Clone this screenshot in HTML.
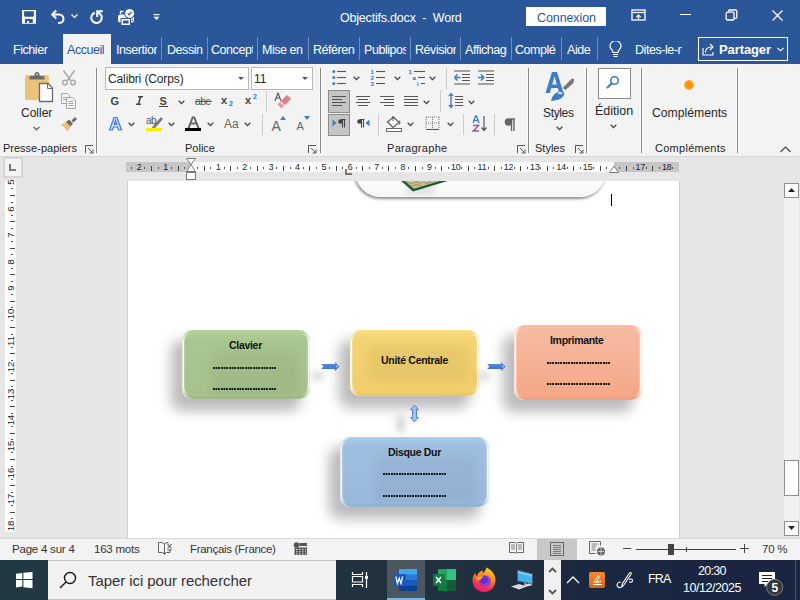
<!DOCTYPE html>
<html><head><meta charset="utf-8">
<style>
*{margin:0;padding:0;box-sizing:border-box}
html,body{width:800px;height:600px;overflow:hidden;font-family:"Liberation Sans",sans-serif;background:#e6e6e6;position:relative}
.a{position:absolute}
#title{left:0;top:0;width:800px;height:64px;background:#2b579a}
#ribbon{left:0;top:64px;width:800px;height:93px;background:#f3f3f3;border-bottom:1px solid #d6d6d6}
#rulerrow{left:0;top:157px;width:800px;height:23px;background:#e6e6e6}
#docarea{left:0;top:180px;width:800px;height:358px;background:#e6e6e6}
#page{left:128px;top:181px;width:551px;height:357px;background:#fff}
#status{left:0;top:538px;width:800px;height:22px;background:#f3f3f3;border-top:1px solid #dadada}
#taskbar{left:0;top:560px;width:800px;height:40px;background:linear-gradient(90deg,#213a44 0,#22333f 40%,#1f2f3e 65%,#1b2841 72%,#1a2541 100%)}
.w{color:#fff}
.tab{font-size:12.5px;letter-spacing:-0.45px}
.rb{font-size:12px;color:#262626}
.gl{font-size:11px;letter-spacing:0px}
.sep{width:1px;background:#cdcdcd}
.gsep{width:1px;background:#878787;box-shadow:-1px 0 #fbfbfb,1px 0 #fbfbfb}
.rl{font-size:8.8px;color:#222;line-height:12px}
.rlv{font-size:9.6px}
.bx{font-size:10.5px;font-weight:bold;color:#111;letter-spacing:-0.3px}
.bxd{font-size:8px;font-weight:bold;color:#222;letter-spacing:-0.5px}
.sb{font-size:11.5px;color:#333;letter-spacing:-0.22px}
.t{white-space:nowrap;line-height:1}
</style></head><body>

<div id="title" class="a">
 <!-- save -->
 <svg class="a" style="left:21px;top:9px" width="16" height="16" viewBox="0 0 16 16"><rect x="1" y="1" width="14" height="13.8" rx="0.5" fill="#fff"/><path d="M3.1 2.2h9.8v4.7l-0.8 0.8H3.9l-0.8-0.8z" fill="#2b579a"/><rect x="4" y="10" width="7.8" height="3.9" fill="#2b579a"/><rect x="6" y="11.9" width="2" height="2" fill="#fff"/></svg>
 <!-- undo -->
 <svg class="a" style="left:50px;top:9px" width="17" height="15" viewBox="0 0 17 15"><path d="M2.5 5.5h6.5a4.5 4.5 0 0 1 4.5 4.5 4 4 0 0 1-4 4H8" fill="none" stroke="#fff" stroke-width="2"/><path d="M6.2 1.5L2.2 5.5l4 4" fill="none" stroke="#fff" stroke-width="2"/></svg>
 <svg class="a" style="left:71px;top:14px" width="7" height="5" viewBox="0 0 7 5"><path d="M0.5 0.5l3 3 3-3" fill="none" stroke="#fff" stroke-width="1.2"/></svg>
 <!-- redo -->
 <svg class="a" style="left:89px;top:8.5px" width="16" height="16" viewBox="0 0 16 16"><path d="M5.9 3.7A5.25 5.25 0 1 0 11.2 5" fill="none" stroke="#fff" stroke-width="2"/><path d="M11.4 5.2L8.8 2.8" stroke="#fff" stroke-width="2"/><path d="M8.2 8V2.3h5.6" fill="none" stroke="#fff" stroke-width="2"/></svg>
 <!-- print preview -->
 <svg class="a" style="left:117px;top:8px" width="19" height="17" viewBox="0 0 19 17"><path d="M3.5 6V3.5h3" fill="none" stroke="#fff" stroke-width="1.3"/><rect x="1" y="6.5" width="16" height="8" rx="2" fill="#fff"/><rect x="3.5" y="10" width="10.5" height="7" fill="#2b579a"/><rect x="4.5" y="11" width="8.5" height="6" fill="#fff"/><rect x="6" y="12.5" width="5.5" height="3" fill="#2b579a"/><circle cx="12.6" cy="5.4" r="5.4" fill="#2b579a"/><circle cx="12.6" cy="5.4" r="4.5" fill="#fff"/><path d="M10.8 5.4l1.3 1.4 2.4-2.8" fill="none" stroke="#2b579a" stroke-width="1.2"/><circle cx="15.5" cy="12" r="0.8" fill="#2b579a"/></svg>
 <svg class="a" style="left:153px;top:14px" width="7" height="7" viewBox="0 0 7 7"><rect x="0.5" y="0" width="6" height="1.2" fill="#fff"/><path d="M0.5 2.8h6l-3 3.5z" fill="#fff"/></svg>
 <div class="a t w" style="left:340px;top:12px;font-size:12.5px;letter-spacing:-0.2px">Objectifs.docx&nbsp; -&nbsp; Word</div>
 <div class="a" style="left:526px;top:7px;width:80px;height:19px;background:#fff"></div>
 <div class="a t" style="left:537px;top:12px;font-size:12.5px;color:#2b579a;letter-spacing:-0.1px">Connexion</div>
 <!-- ribbon display options -->
 <svg class="a" style="left:631px;top:9px" width="15" height="12" viewBox="0 0 15 12"><rect x="1" y="1" width="13" height="10" fill="none" stroke="#fff" stroke-width="1.3"/><path d="M1 3.5h13" stroke="#fff" stroke-width="1.2"/><path d="M7.5 10.5V6M5.3 8.2L7.5 6l2.2 2.2" fill="none" stroke="#fff" stroke-width="1.2"/></svg>
 <div class="a" style="left:680px;top:14px;width:11px;height:1px;background:#fff"></div>
 <svg class="a" style="left:725px;top:9px" width="13" height="12" viewBox="0 0 13 12"><rect x="1.2" y="3.2" width="7.8" height="7.8" rx="1.2" fill="none" stroke="#fff" stroke-width="1.3"/><path d="M3.5 3V2.2a1.2 1.2 0 0 1 1.2-1.2h5.6a1.5 1.5 0 0 1 1.5 1.5v5.6a1.2 1.2 0 0 1-1.2 1.2H9.2" fill="none" stroke="#fff" stroke-width="1.3"/></svg>
 <svg class="a" style="left:772px;top:10px" width="11" height="11" viewBox="0 0 11 11"><path d="M0.5 0.5l10 10M10.5 0.5l-10 10" stroke="#fff" stroke-width="1.2"/></svg>

 <div class="a" style="left:63px;top:34px;width:48px;height:30px;background:#f3f3f3"></div>
 <div class="a t w tab" style="left:13px;top:44px">Fichier</div>
 <div class="a t tab" style="left:67px;top:44px;color:#2b579a">Accueil</div>
 <div class="a t w tab" style="left:116px;top:44px;width:41px;overflow:hidden">Insertion</div>
 <div class="a t w tab" style="left:167px;top:44px;width:36px;overflow:hidden">Dessin</div>
 <div class="a t w tab" style="left:211px;top:44px;width:42px;overflow:hidden">Conception</div>
 <div class="a t w tab" style="left:262px;top:44px;width:42px;overflow:hidden">Mise en page</div>
 <div class="a t w tab" style="left:313px;top:44px;width:42px;overflow:hidden">Références</div>
 <div class="a t w tab" style="left:364px;top:44px;width:42px;overflow:hidden">Publipostage</div>
 <div class="a t w tab" style="left:415px;top:44px;width:41px;overflow:hidden">Révision</div>
 <div class="a t w tab" style="left:465px;top:44px;width:42px;overflow:hidden">Affichage</div>
 <div class="a t w tab" style="left:515px;top:44px;width:41px;overflow:hidden">Compléments</div>
 <div class="a t w tab" style="left:567px;top:44px;width:28px;overflow:hidden">Aide</div>
 <div class="a" style="left:161px;top:37px;width:1px;height:23px;background:#6d8fc0"></div>
 <div class="a" style="left:207px;top:37px;width:1px;height:23px;background:#6d8fc0"></div>
 <div class="a" style="left:257px;top:37px;width:1px;height:23px;background:#6d8fc0"></div>
 <div class="a" style="left:308px;top:37px;width:1px;height:23px;background:#6d8fc0"></div>
 <div class="a" style="left:359px;top:37px;width:1px;height:23px;background:#6d8fc0"></div>
 <div class="a" style="left:410px;top:37px;width:1px;height:23px;background:#6d8fc0"></div>
 <div class="a" style="left:460px;top:37px;width:1px;height:23px;background:#6d8fc0"></div>
 <div class="a" style="left:511px;top:37px;width:1px;height:23px;background:#6d8fc0"></div>
 <div class="a" style="left:561px;top:37px;width:1px;height:23px;background:#6d8fc0"></div>
 <div class="a" style="left:597px;top:37px;width:1px;height:23px;background:#6d8fc0"></div>

 <svg class="a" style="left:609px;top:41px" width="13" height="17" viewBox="0 0 13 17"><path d="M4 11.5C4 9 1 7.8 1 5.2a5.5 5.5 0 0 1 11 0c0 2.6-3 3.8-3 6.3z" fill="none" stroke="#fff" stroke-width="1.2"/><path d="M4 13.5h5M4.5 15.5h4" stroke="#fff" stroke-width="1.2"/></svg>
 <div class="a t w tab" style="left:635px;top:44px;width:47px;overflow:hidden">Dites-le-nous</div>
 <div class="a" style="left:698px;top:37px;width:90px;height:24px;border:1px solid #fff"></div>
 <svg class="a" style="left:702px;top:42px" width="14" height="14" viewBox="0 0 14 14"><path d="M1 6v7h10V10" fill="none" stroke="#fff" stroke-width="1.1"/><path d="M3.5 10.5c0-4 2.5-5.5 6-5.5M8 2l3 3-3 3" fill="none" stroke="#fff" stroke-width="1.1"/></svg>
 <div class="a t w" style="left:719px;top:42.5px;font-size:13px;font-weight:bold;letter-spacing:-0.1px">Partager</div>
 <svg class="a" style="left:777px;top:47px" width="7" height="5" viewBox="0 0 7 5"><path d="M0.5 0.8l3 3 3-3" fill="none" stroke="#fff" stroke-width="1.1"/></svg>
</div>
<!--RIBBON-->

<div id="ribbon" class="a"></div>
 <!-- clipboard group -->
 <svg class="a" style="left:24px;top:71px" width="31" height="32" viewBox="0 0 31 32"><rect x="1" y="4" width="24" height="25" rx="1.8" fill="#eac27a"/><path d="M5.5 8.5V6.5c0-1 .5-1.5 1.5-1.5h3.5V3.5a2.5 2.5 0 0 1 5 0V5h3.5c1 0 1.5.5 1.5 1.5v2z" fill="#6b6b6b"/><circle cx="13" cy="3.5" r="1" fill="#eac27a"/><path d="M15.5 12.5h8.5l4.5 4.5v13.5h-13z" fill="#fff" stroke="#6b6b6b" stroke-width="1.3"/><path d="M23.5 12.5v5h5" fill="none" stroke="#6b6b6b" stroke-width="1"/></svg>
 <div class="a t rb" style="left:21px;top:107px">Coller</div>
 <svg class="a" style="left:33px;top:126px" width="7" height="5" viewBox="0 0 7 5"><path d="M0.5 0.8l3 3 3-3" fill="none" stroke="#444" stroke-width="1.1"/></svg>
 <svg class="a" style="left:61px;top:69px" width="16" height="17" viewBox="0 0 16 17"><path d="M2.5 1.5l7 10M13.5 1.5l-7 10" stroke="#a6a6a6" stroke-width="1.4"/><circle cx="4" cy="13.5" r="2.4" fill="none" stroke="#a6a6a6" stroke-width="1.3"/><circle cx="12" cy="13.5" r="2.4" fill="none" stroke="#a6a6a6" stroke-width="1.3"/></svg>
 <svg class="a" style="left:60px;top:92px" width="17" height="17" viewBox="0 0 17 17"><path d="M1.5 1.5h6l2 2v8h-8z" fill="none" stroke="#a6a6a6"/><path d="M6.5 5.5h6l3 3v8h-9z" fill="#f3f3f3" stroke="#a6a6a6"/><path d="M8.5 9.5h5M8.5 11.5h5M8.5 13.5h5M3 5.5h3M3 7.5h3" stroke="#a6a6a6"/></svg>
 <svg class="a" style="left:60px;top:116px" width="18" height="16" viewBox="0 0 18 16"><path d="M1 8.5l5.5-3 4.5 4.5-3 5.5z" fill="#eac27a"/><path d="M6 6l3-2.5 4 4L10.5 10.5z" fill="#6b6b6b"/><path d="M11.5 4.5l3.5-3.5 2 2-3.5 3.5z" fill="#6b6b6b"/></svg>
 <div class="a t rb gl" style="left:3px;top:143px">Presse-papiers</div>
 <svg class="a" style="left:85px;top:145px" width="9" height="9" viewBox="0 0 9 9"><path d="M0.5 8V0.5H8" fill="none" stroke="#555"/><path d="M3 3l5 5M8 4.5V8H4.5" fill="none" stroke="#555"/></svg>
 <div class="a gsep" style="left:96px;top:68px;height:85px"></div>
 <!-- police -->
 <div class="a" style="left:105px;top:67px;width:144px;height:23px;background:#fff;border:1px solid #b9b9b9"></div>
 <div class="a t rb" style="left:108px;top:73px;letter-spacing:-0.12px">Calibri (Corps)</div>
 <svg class="a" style="left:238px;top:77px" width="6" height="3" viewBox="0 0 6 3"><path d="M0 0h6L3 3z" fill="#555"/></svg>
 <div class="a" style="left:251px;top:67px;width:62px;height:23px;background:#fff;border:1px solid #b9b9b9"></div>
 <div class="a t rb" style="left:254px;top:73px">11</div>
 <svg class="a" style="left:302px;top:77px" width="6" height="3" viewBox="0 0 6 3"><path d="M0 0h6L3 3z" fill="#555"/></svg>
 <div class="a gsep" style="left:320px;top:68px;height:85px"></div>
 <div class="a t rb gl" style="left:185px;top:143px">Police</div>
 <svg class="a" style="left:308px;top:145px" width="9" height="9" viewBox="0 0 9 9"><path d="M0.5 8V0.5H8" fill="none" stroke="#555"/><path d="M3 3l5 5M8 4.5V8H4.5" fill="none" stroke="#555"/></svg>
 <!-- paragraphe -->
 <div class="a t rb gl" style="left:387px;top:143px;letter-spacing:0.3px">Paragraphe</div>
 <svg class="a" style="left:517px;top:145px" width="9" height="9" viewBox="0 0 9 9"><path d="M0.5 8V0.5H8" fill="none" stroke="#555"/><path d="M3 3l5 5M8 4.5V8H4.5" fill="none" stroke="#555"/></svg>
 <div class="a gsep" style="left:528px;top:68px;height:85px"></div>
 <!-- styles -->
 <div class="a t rb" style="left:543px;top:107px;letter-spacing:-0.35px">Styles</div>
 <div class="a t rb gl" style="left:535px;top:143px">Styles</div>
 <svg class="a" style="left:575px;top:145px" width="9" height="9" viewBox="0 0 9 9"><path d="M0.5 8V0.5H8" fill="none" stroke="#555"/><path d="M3 3l5 5M8 4.5V8H4.5" fill="none" stroke="#555"/></svg>
 <div class="a gsep" style="left:586px;top:68px;height:85px"></div>
 <!-- edition -->
 <div class="a" style="left:598px;top:68px;width:33px;height:31px;background:#fff;border:1px solid #8a8a8a"></div>
 <div class="a t rb" style="left:595px;top:105px;font-size:12.5px">Édition</div>
 <div class="a gsep" style="left:641px;top:68px;height:85px"></div>
 <!-- complements -->
 <div class="a" style="left:684px;top:80px;width:10px;height:10px;border-radius:50%;background:radial-gradient(circle,#ff9400 0,#ff9400 45%,rgba(255,148,0,0.6) 75%,rgba(255,148,0,0) 100%)"></div>
 <div class="a t rb" style="left:652px;top:107px;font-size:12.2px">Compléments</div>
 <div class="a t rb gl" style="left:655px;top:143px;letter-spacing:0.27px">Compléments</div>
 <div class="a gsep" style="left:737px;top:68px;height:85px"></div>
 <svg class="a" style="left:780px;top:146px" width="11" height="7" viewBox="0 0 11 7"><path d="M0.5 6l5-5 5 5" fill="none" stroke="#444" stroke-width="1.1"/></svg>

<!-- POLICE ICONS -->
<div class="a t" style="left:110.5px;top:96px;font-size:11px;font-weight:bold;color:#444">G</div>
<svg class="a" style="left:135px;top:96px" width="9" height="9" viewBox="0 0 9 9"><path d="M3 0.8h5M1 8.2h5M5.5 0.8L3.5 8.2" stroke="#444" stroke-width="1.5" fill="none"/></svg>
<div class="a t" style="left:159.5px;top:96px;font-size:11px;font-weight:bold;color:#444">S</div>
<div class="a" style="left:159px;top:106px;width:9px;height:1.3px;background:#444"></div>
<svg class="a" style="left:178px;top:100px" width="7" height="5" viewBox="0 0 7 5"><path d="M0.7 0.8l2.8 2.8 2.8-2.8" fill="none" stroke="#444" stroke-width="1.3"/></svg>
<div class="a t" style="left:195px;top:96px;font-size:10.5px;color:#555;letter-spacing:-0.6px">abc</div>
<div class="a" style="left:195px;top:101px;width:17px;height:1px;background:#555"></div>
<div class="a t" style="left:221px;top:95px;font-size:11px;font-weight:bold;color:#444">x</div>
<div class="a t" style="left:229px;top:100px;font-size:7px;font-weight:bold;color:#2e75c0">2</div>
<div class="a t" style="left:245px;top:95px;font-size:11px;font-weight:bold;color:#444">x</div>
<div class="a t" style="left:253px;top:93px;font-size:7px;font-weight:bold;color:#2e75c0">2</div>
<div class="a sep" style="left:266px;top:91px;height:21px"></div>
<svg class="a" style="left:274px;top:92px" width="18" height="18" viewBox="0 0 18 18"><path d="M1 9L4 1l3 8M2.2 6h3.6" fill="none" stroke="#555" stroke-width="1.1"/><path d="M7 9l6-6 4 4-6 6z" fill="#e47b8c"/><path d="M3.5 12.5L7 9l4 4-3.5 3.5z" fill="#ea95a2"/><path d="M6.5 10l4 4" stroke="#fff" stroke-width="1"/></svg>
<svg class="a" style="left:108px;top:116px" width="15" height="15" viewBox="0 0 15 15"><path d="M1.5 14L6 1.5h3L13.5 14h-3l-1-3h-4l-1 3z M6.3 8.5h2.4L7.5 4.5z" fill="#c9dcf3" stroke="#3f7dc8" stroke-width="1.2"/></svg>
<svg class="a" style="left:128px;top:122px" width="7" height="5" viewBox="0 0 7 5"><path d="M0.7 0.8l2.8 2.8 2.8-2.8" fill="none" stroke="#444" stroke-width="1.3"/></svg>
<div class="a t" style="left:146px;top:116px;font-size:10px;color:#555;letter-spacing:-0.5px">ab</div>
<svg class="a" style="left:150px;top:115px" width="13" height="14" viewBox="0 0 13 14"><path d="M3 11l8-9 2 2-8 9z" fill="#777"/><path d="M2 13l1-2 2 2z" fill="#777"/></svg>
<div class="a" style="left:146px;top:128px;width:16px;height:3px;background:#f5f300"></div>
<svg class="a" style="left:168px;top:122px" width="7" height="5" viewBox="0 0 7 5"><path d="M0.7 0.8l2.8 2.8 2.8-2.8" fill="none" stroke="#444" stroke-width="1.3"/></svg>
<svg class="a" style="left:186px;top:116px" width="15" height="12" viewBox="0 0 15 12"><path d="M1.5 12L6 0.5h3L13.5 12h-2.2L10 8.5H5L3.7 12z M5.7 6.5h3.6L7.5 2z" fill="#666"/></svg>
<div class="a" style="left:185px;top:128px;width:16px;height:3px;background:#000"></div>
<svg class="a" style="left:207px;top:122px" width="7" height="5" viewBox="0 0 7 5"><path d="M0.7 0.8l2.8 2.8 2.8-2.8" fill="none" stroke="#444" stroke-width="1.3"/></svg>
<div class="a t" style="left:224px;top:118px;font-size:12px;color:#666">Aa</div>
<svg class="a" style="left:244px;top:122px" width="7" height="5" viewBox="0 0 7 5"><path d="M0.7 0.8l2.8 2.8 2.8-2.8" fill="none" stroke="#444" stroke-width="1.3"/></svg>
<div class="a sep" style="left:262px;top:114px;height:21px"></div>
<div class="a t" style="left:271.5px;top:118.5px;font-size:14px;color:#666">A</div>
<svg class="a" style="left:280px;top:116px" width="6" height="4" viewBox="0 0 6 4"><path d="M0 4h6L3 0z" fill="#3f7dc8"/></svg>
<div class="a t" style="left:296.5px;top:121px;font-size:11px;color:#666">A</div>
<svg class="a" style="left:304px;top:116px" width="6" height="4" viewBox="0 0 6 4"><path d="M0 0h6L3 4z" fill="#3f7dc8"/></svg>
<!-- PARA ICONS -->
<svg class="a" style="left:332px;top:69px" width="15" height="16" viewBox="0 0 15 16"><circle cx="1.8" cy="2.5" r="1.5" fill="#3f7dc8"/><path d="M5 2.5h9" stroke="#555" stroke-width="1.1"/><circle cx="1.8" cy="8.5" r="1.5" fill="#3f7dc8"/><path d="M5 8.5h9" stroke="#555" stroke-width="1.1"/><circle cx="1.8" cy="14.5" r="1.5" fill="#3f7dc8"/><path d="M5 14.5h9" stroke="#555" stroke-width="1.1"/></svg>
<svg class="a" style="left:353px;top:76px" width="7" height="5" viewBox="0 0 7 5"><path d="M0.7 0.8l2.8 2.8 2.8-2.8" fill="none" stroke="#444" stroke-width="1.3"/></svg>
<svg class="a" style="left:370px;top:68px" width="16" height="18" viewBox="0 0 16 18"><text x="0.5" y="6.0" font-size="6.2" font-weight="bold" fill="#2f6fc0" font-family="Liberation Sans">1</text><path d="M6 3.5h9" stroke="#555" stroke-width="1.1"/><text x="0.5" y="12.0" font-size="6.2" font-weight="bold" fill="#2f6fc0" font-family="Liberation Sans">2</text><path d="M6 9.5h9" stroke="#555" stroke-width="1.1"/><text x="0.5" y="18.0" font-size="6.2" font-weight="bold" fill="#2f6fc0" font-family="Liberation Sans">3</text><path d="M6 15.5h9" stroke="#555" stroke-width="1.1"/></svg>
<svg class="a" style="left:394px;top:76px" width="7" height="5" viewBox="0 0 7 5"><path d="M0.7 0.8l2.8 2.8 2.8-2.8" fill="none" stroke="#444" stroke-width="1.3"/></svg>
<svg class="a" style="left:408px;top:68px" width="18" height="18" viewBox="0 0 18 18"><text x="0.5" y="6" font-size="6.2" font-weight="bold" fill="#2f6fc0" font-family="Liberation Sans">1</text><path d="M6 3.5h11" stroke="#555" stroke-width="1.1"/><text x="4.5" y="12" font-size="6.2" font-weight="bold" fill="#2f6fc0" font-family="Liberation Sans">a</text><path d="M10 9.5h7" stroke="#555" stroke-width="1.1"/><text x="9" y="18" font-size="6.2" font-weight="bold" fill="#2f6fc0" font-family="Liberation Sans">i</text><path d="M13 15.5h4" stroke="#555" stroke-width="1.1"/></svg>
<svg class="a" style="left:429px;top:76px" width="7" height="5" viewBox="0 0 7 5"><path d="M0.7 0.8l2.8 2.8 2.8-2.8" fill="none" stroke="#444" stroke-width="1.3"/></svg>
<div class="a sep" style="left:446px;top:68px;height:21px"></div>
<svg class="a" style="left:453px;top:70px" width="18" height="15" viewBox="0 0 18 15"><path d="M1 1h16M9 4.5h8M9 7.5h8M9 10.5h8M1 14h16" stroke="#555" stroke-width="1.1"/><path d="M1.5 7.5h6M1.5 7.5l3-3M1.5 7.5l3 3" fill="none" stroke="#3f7dc8" stroke-width="1.6"/></svg>
<svg class="a" style="left:477px;top:70px" width="18" height="15" viewBox="0 0 18 15"><path d="M1 1h16M9 4.5h8M9 7.5h8M9 10.5h8M1 14h16" stroke="#555" stroke-width="1.1"/><path d="M1 7.5h6M7 7.5l-3-3M7 7.5l-3 3" fill="none" stroke="#3f7dc8" stroke-width="1.6"/></svg>
<div class="a" style="left:328px;top:90px;width:22px;height:23px;background:#c5c5c5;border:1px solid #8c8c8c"></div>
<svg class="a" style="left:331px;top:95px" width="16" height="13" viewBox="0 0 16 13"><path d="M1 1.5h14M1 4.5h10M1 7.5h14M1 10.5h10" stroke="#555" stroke-width="1.1"/></svg>
<svg class="a" style="left:355px;top:95px" width="16" height="13" viewBox="0 0 16 13"><path d="M1 1.5h14M3 4.5h10M1 7.5h14M3 10.5h10" stroke="#555" stroke-width="1.1"/></svg>
<svg class="a" style="left:379px;top:95px" width="16" height="13" viewBox="0 0 16 13"><path d="M1 1.5h14M5 4.5h10M1 7.5h14M5 10.5h10" stroke="#555" stroke-width="1.1"/></svg>
<svg class="a" style="left:403px;top:95px" width="16" height="13" viewBox="0 0 16 13"><path d="M1 1.5h14M1 4.5h14M1 7.5h14M1 10.5h14" stroke="#555" stroke-width="1.1"/></svg>
<svg class="a" style="left:423px;top:100px" width="7" height="5" viewBox="0 0 7 5"><path d="M0.7 0.8l2.8 2.8 2.8-2.8" fill="none" stroke="#444" stroke-width="1.3"/></svg>
<div class="a sep" style="left:440px;top:90px;height:22px"></div>
<svg class="a" style="left:448px;top:92px" width="16" height="17" viewBox="0 0 16 17"><path d="M3 1.5v14M1 4l2-2.5L5 4M1 13l2 2.5L5 13" fill="none" stroke="#3f7dc8" stroke-width="1.4"/><path d="M7 4.5h8M7 7.5h8M7 10.5h8M7 13.5h8" stroke="#555" stroke-width="1.1"/></svg>
<svg class="a" style="left:468px;top:100px" width="7" height="5" viewBox="0 0 7 5"><path d="M0.7 0.8l2.8 2.8 2.8-2.8" fill="none" stroke="#444" stroke-width="1.3"/></svg>
<div class="a" style="left:328px;top:114px;width:22px;height:22px;background:#c5c5c5;border:1px solid #8c8c8c"></div>
<svg class="a" style="left:332px;top:119px" width="14" height="9" viewBox="0 0 14 9"><path d="M0.5 0.5l4 3.5-4 3.5z" fill="#3f7dc8"/><path d="M9 0.5h4.5M10.5 0.5v8M12.5 0.5v8" stroke="#444" stroke-width="1.1"/><circle cx="8.5" cy="2.5" r="2.3" fill="#444"/></svg>
<svg class="a" style="left:356px;top:119px" width="14" height="9" viewBox="0 0 14 9"><path d="M4 0.5h4.5M5.5 0.5v8M7.5 0.5v8" stroke="#444" stroke-width="1.1"/><circle cx="3.5" cy="2.5" r="2.3" fill="#444"/><path d="M13.5 0.5l-4 3.5 4 3.5z" fill="#3f7dc8"/></svg>
<div class="a sep" style="left:378px;top:114px;height:21px"></div>
<svg class="a" style="left:385px;top:115px" width="18" height="18" viewBox="0 0 18 18"><path d="M2.5 7l6-5 5.5 5.5-6 5z" fill="#fff" stroke="#555" stroke-width="1.1"/><path d="M8 1v5" stroke="#555"/><path d="M14 5c2 1 2 4 0 5z" fill="#3f7dc8"/><rect x="1.5" y="13.5" width="15" height="3" fill="#fff" stroke="#666"/></svg>
<svg class="a" style="left:407px;top:122px" width="7" height="5" viewBox="0 0 7 5"><path d="M0.7 0.8l2.8 2.8 2.8-2.8" fill="none" stroke="#444" stroke-width="1.3"/></svg>
<svg class="a" style="left:425px;top:116px" width="15" height="14" viewBox="0 0 15 14"><path d="M1 1h13M1 7h13M1 1v12M7.5 1v12M14 1v12" fill="none" stroke="#777" stroke-width="1" stroke-dasharray="1 1"/><path d="M1 13.5h13" stroke="#555" stroke-width="1.1"/></svg>
<svg class="a" style="left:447px;top:122px" width="7" height="5" viewBox="0 0 7 5"><path d="M0.7 0.8l2.8 2.8 2.8-2.8" fill="none" stroke="#444" stroke-width="1.3"/></svg>
<div class="a sep" style="left:463px;top:114px;height:21px"></div>
<svg class="a" style="left:472px;top:115px" width="16" height="17" viewBox="0 0 16 17"><path d="M1 8L3.5 1h1L7 8M2 5.5h4" fill="none" stroke="#3f7dc8" stroke-width="1.3"/><path d="M1.2 10.5h5.5L1.2 16h5.8" fill="none" stroke="#8a4fbf" stroke-width="1.3"/><path d="M12 1v14M9.5 12.5L12 15.5l2.5-3" fill="none" stroke="#555" stroke-width="1.2"/></svg>
<div class="a sep" style="left:494px;top:114px;height:21px"></div>
<svg class="a" style="left:504px;top:118px" width="12" height="13" viewBox="0 0 12 13"><path d="M6 1h5M7.5 1v12M10 1v12" stroke="#666" stroke-width="1.4"/><circle cx="4.5" cy="4" r="3.8" fill="#666"/></svg>
<svg class="a" style="left:545px;top:71px" width="30" height="31" viewBox="0 0 30 31"><path d="M0.5 22L7 1h5l6.5 21h-4.2l-1.5-5H6.2l-1.5 5z M7.2 13.5h4.6L9.5 5.5z" fill="#3f7dc8"/><path d="M17.5 17l9.5-9.5 2 0.5-0.5 4-8 7z" fill="#777"/><path d="M6 30c0.5-4 4-9 9-10 3-0.5 5 1.5 4 4-1.5 3.5-6 5.5-13 6z" fill="#3f7dc8"/><path d="M13 22.5c1.5-1 3-1 4 0.5" stroke="#fff" stroke-width="1.5" fill="none"/></svg>
<svg class="a" style="left:556px;top:126px" width="7" height="5" viewBox="0 0 7 5"><path d="M0.7 0.8l2.8 2.8 2.8-2.8" fill="none" stroke="#444" stroke-width="1.3"/></svg>
<svg class="a" style="left:606px;top:75px" width="14" height="14" viewBox="0 0 14 14"><circle cx="8.5" cy="5.5" r="3.8" fill="none" stroke="#3f7dc8" stroke-width="1.6"/><path d="M5.8 8.2L1.5 12.5" stroke="#3f7dc8" stroke-width="2" stroke-linecap="round"/></svg>
<svg class="a" style="left:610px;top:124px" width="7" height="5" viewBox="0 0 7 5"><path d="M0.7 0.8l2.8 2.8 2.8-2.8" fill="none" stroke="#444" stroke-width="1.3"/></svg>
<div id="rulerrow" class="a"></div>
<div id="docarea" class="a"></div>
<div id="page" class="a"></div>
<div class="a" style="left:127px;top:181px;width:1px;height:357px;background:#cfcfcf"></div>
<div class="a" style="left:679px;top:181px;width:1px;height:357px;background:#cfcfcf"></div>


<!-- DOC CONTENT -->
<div class="a" style="left:128px;top:181px;width:551px;height:357px;overflow:hidden">
 <div class="a" style="left:227px;top:-61px;width:251px;height:77px;border-radius:26px;background:linear-gradient(#f4f4f4,#fcfcfc 80%,#f6f6f6);box-shadow:-1px 1.5px 3px rgba(0,0,0,0.45)"></div>
 <div class="a" style="left:278px;top:4px;width:28px;height:9px;background:rgba(0,0,0,0.10);filter:blur(3px)"></div><svg class="a" style="left:265px;top:-1px" width="70" height="14" viewBox="0 0 70 14"><path d="M7 0L20 11.5 58 0z" fill="#24583a"/><path d="M10.5 0L21 8.8 50 0z" fill="#c8bd8e"/><path d="M13 1.5l5 2.5 6-2.5 5 3M19 6l5-1.5 4 1.5M30 2l4 1.5 4-2" stroke="#9d8d55" stroke-width="0.9" fill="none"/></svg>
</div>
<div class="a" style="left:611px;top:194px;width:1px;height:12px;background:#000"></div>
<div class="a" style="left:182px;top:330px;width:128px;height:69px;border-radius:10px;background:linear-gradient(#b5d09d 0,#aac690 14%,#a6c18c 100%);box-shadow:-10px 11px 13px 1px rgba(0,0,0,0.27)"></div>
<div class="a" style="left:182px;top:330px;width:128px;height:69px;border-radius:10px;box-shadow:inset 3px 0 2px -1px rgba(255,255,255,0.75), inset -3px 0 2px -1px rgba(255,255,255,0.75), inset 0 -2px 3px rgba(0,0,0,0.05)"></div>
<div class="a" style="left:183px;top:334px;width:126px;height:61px;border-radius:8px;border-left:1.5px solid rgba(255,255,255,0.7);border-right:1.5px solid rgba(255,255,255,0.7);filter:blur(0.4px)"></div>
<div class="a" style="left:212px;top:350px;width:88px;height:46px;border-radius:6px;background:rgba(0,0,0,0.045);filter:blur(4px)"></div>
<div class="a t bx" style="left:229px;top:340px">Clavier</div>
<svg class="a" style="left:213px;top:367px" width="64" height="2" viewBox="0 0 64 2"><rect x="0.00" y="0" width="1.8" height="2" fill="#111"/><rect x="2.55" y="0" width="1.8" height="2" fill="#111"/><rect x="5.10" y="0" width="1.8" height="2" fill="#111"/><rect x="8.00" y="0" width="1.8" height="2" fill="#111"/><rect x="10.55" y="0" width="1.8" height="2" fill="#111"/><rect x="13.10" y="0" width="1.8" height="2" fill="#111"/><rect x="16.00" y="0" width="1.8" height="2" fill="#111"/><rect x="18.55" y="0" width="1.8" height="2" fill="#111"/><rect x="21.10" y="0" width="1.8" height="2" fill="#111"/><rect x="24.00" y="0" width="1.8" height="2" fill="#111"/><rect x="26.55" y="0" width="1.8" height="2" fill="#111"/><rect x="29.10" y="0" width="1.8" height="2" fill="#111"/><rect x="32.00" y="0" width="1.8" height="2" fill="#111"/><rect x="34.55" y="0" width="1.8" height="2" fill="#111"/><rect x="37.10" y="0" width="1.8" height="2" fill="#111"/><rect x="40.00" y="0" width="1.8" height="2" fill="#111"/><rect x="42.55" y="0" width="1.8" height="2" fill="#111"/><rect x="45.10" y="0" width="1.8" height="2" fill="#111"/><rect x="48.00" y="0" width="1.8" height="2" fill="#111"/><rect x="50.55" y="0" width="1.8" height="2" fill="#111"/><rect x="53.10" y="0" width="1.8" height="2" fill="#111"/><rect x="56.00" y="0" width="1.8" height="2" fill="#111"/><rect x="58.55" y="0" width="1.8" height="2" fill="#111"/><rect x="61.10" y="0" width="1.8" height="2" fill="#111"/></svg>
<svg class="a" style="left:213px;top:388px" width="64" height="2" viewBox="0 0 64 2"><rect x="0.00" y="0" width="1.8" height="2" fill="#111"/><rect x="2.55" y="0" width="1.8" height="2" fill="#111"/><rect x="5.10" y="0" width="1.8" height="2" fill="#111"/><rect x="8.00" y="0" width="1.8" height="2" fill="#111"/><rect x="10.55" y="0" width="1.8" height="2" fill="#111"/><rect x="13.10" y="0" width="1.8" height="2" fill="#111"/><rect x="16.00" y="0" width="1.8" height="2" fill="#111"/><rect x="18.55" y="0" width="1.8" height="2" fill="#111"/><rect x="21.10" y="0" width="1.8" height="2" fill="#111"/><rect x="24.00" y="0" width="1.8" height="2" fill="#111"/><rect x="26.55" y="0" width="1.8" height="2" fill="#111"/><rect x="29.10" y="0" width="1.8" height="2" fill="#111"/><rect x="32.00" y="0" width="1.8" height="2" fill="#111"/><rect x="34.55" y="0" width="1.8" height="2" fill="#111"/><rect x="37.10" y="0" width="1.8" height="2" fill="#111"/><rect x="40.00" y="0" width="1.8" height="2" fill="#111"/><rect x="42.55" y="0" width="1.8" height="2" fill="#111"/><rect x="45.10" y="0" width="1.8" height="2" fill="#111"/><rect x="48.00" y="0" width="1.8" height="2" fill="#111"/><rect x="50.55" y="0" width="1.8" height="2" fill="#111"/><rect x="53.10" y="0" width="1.8" height="2" fill="#111"/><rect x="56.00" y="0" width="1.8" height="2" fill="#111"/><rect x="58.55" y="0" width="1.8" height="2" fill="#111"/><rect x="61.10" y="0" width="1.8" height="2" fill="#111"/></svg>
<div class="a" style="left:350px;top:330px;width:129px;height:66px;border-radius:10px;background:linear-gradient(#f9dd82 0,#f3d372 14%,#efcd6a 100%);box-shadow:-10px 11px 13px 1px rgba(0,0,0,0.27)"></div>
<div class="a" style="left:350px;top:330px;width:129px;height:66px;border-radius:10px;box-shadow:inset 3px 0 2px -1px rgba(255,255,255,0.75), inset -3px 0 2px -1px rgba(255,255,255,0.75), inset 0 -2px 3px rgba(0,0,0,0.05)"></div>
<div class="a" style="left:351px;top:334px;width:127px;height:58px;border-radius:8px;border-left:1.5px solid rgba(255,255,255,0.7);border-right:1.5px solid rgba(255,255,255,0.7);filter:blur(0.4px)"></div>
<div class="a" style="left:368px;top:346px;width:100px;height:34px;border-radius:6px;background:rgba(0,0,0,0.045);filter:blur(4px)"></div>
<div class="a t bx" style="left:381px;top:355px">Unité Centrale</div>
<div class="a" style="left:514px;top:325px;width:128px;height:75px;border-radius:10px;background:linear-gradient(#f6bca3,#f4a686);box-shadow:-10px 11px 13px 1px rgba(0,0,0,0.27)"></div>
<div class="a" style="left:514px;top:325px;width:128px;height:75px;border-radius:10px;box-shadow:inset 3px 0 2px -1px rgba(255,255,255,0.75), inset -3px 0 2px -1px rgba(255,255,255,0.75), inset 0 -2px 3px rgba(0,0,0,0.05)"></div>
<div class="a" style="left:515px;top:329px;width:126px;height:67px;border-radius:8px;border-left:1.5px solid rgba(255,255,255,0.7);border-right:1.5px solid rgba(255,255,255,0.7);filter:blur(0.4px)"></div>
<div class="a t bx" style="left:550px;top:335px">Imprimante</div>
<svg class="a" style="left:547px;top:362px" width="64" height="2" viewBox="0 0 64 2"><rect x="0.00" y="0" width="1.8" height="2" fill="#111"/><rect x="2.55" y="0" width="1.8" height="2" fill="#111"/><rect x="5.10" y="0" width="1.8" height="2" fill="#111"/><rect x="8.00" y="0" width="1.8" height="2" fill="#111"/><rect x="10.55" y="0" width="1.8" height="2" fill="#111"/><rect x="13.10" y="0" width="1.8" height="2" fill="#111"/><rect x="16.00" y="0" width="1.8" height="2" fill="#111"/><rect x="18.55" y="0" width="1.8" height="2" fill="#111"/><rect x="21.10" y="0" width="1.8" height="2" fill="#111"/><rect x="24.00" y="0" width="1.8" height="2" fill="#111"/><rect x="26.55" y="0" width="1.8" height="2" fill="#111"/><rect x="29.10" y="0" width="1.8" height="2" fill="#111"/><rect x="32.00" y="0" width="1.8" height="2" fill="#111"/><rect x="34.55" y="0" width="1.8" height="2" fill="#111"/><rect x="37.10" y="0" width="1.8" height="2" fill="#111"/><rect x="40.00" y="0" width="1.8" height="2" fill="#111"/><rect x="42.55" y="0" width="1.8" height="2" fill="#111"/><rect x="45.10" y="0" width="1.8" height="2" fill="#111"/><rect x="48.00" y="0" width="1.8" height="2" fill="#111"/><rect x="50.55" y="0" width="1.8" height="2" fill="#111"/><rect x="53.10" y="0" width="1.8" height="2" fill="#111"/><rect x="56.00" y="0" width="1.8" height="2" fill="#111"/><rect x="58.55" y="0" width="1.8" height="2" fill="#111"/><rect x="61.10" y="0" width="1.8" height="2" fill="#111"/></svg>
<svg class="a" style="left:547px;top:383px" width="64" height="2" viewBox="0 0 64 2"><rect x="0.00" y="0" width="1.8" height="2" fill="#111"/><rect x="2.55" y="0" width="1.8" height="2" fill="#111"/><rect x="5.10" y="0" width="1.8" height="2" fill="#111"/><rect x="8.00" y="0" width="1.8" height="2" fill="#111"/><rect x="10.55" y="0" width="1.8" height="2" fill="#111"/><rect x="13.10" y="0" width="1.8" height="2" fill="#111"/><rect x="16.00" y="0" width="1.8" height="2" fill="#111"/><rect x="18.55" y="0" width="1.8" height="2" fill="#111"/><rect x="21.10" y="0" width="1.8" height="2" fill="#111"/><rect x="24.00" y="0" width="1.8" height="2" fill="#111"/><rect x="26.55" y="0" width="1.8" height="2" fill="#111"/><rect x="29.10" y="0" width="1.8" height="2" fill="#111"/><rect x="32.00" y="0" width="1.8" height="2" fill="#111"/><rect x="34.55" y="0" width="1.8" height="2" fill="#111"/><rect x="37.10" y="0" width="1.8" height="2" fill="#111"/><rect x="40.00" y="0" width="1.8" height="2" fill="#111"/><rect x="42.55" y="0" width="1.8" height="2" fill="#111"/><rect x="45.10" y="0" width="1.8" height="2" fill="#111"/><rect x="48.00" y="0" width="1.8" height="2" fill="#111"/><rect x="50.55" y="0" width="1.8" height="2" fill="#111"/><rect x="53.10" y="0" width="1.8" height="2" fill="#111"/><rect x="56.00" y="0" width="1.8" height="2" fill="#111"/><rect x="58.55" y="0" width="1.8" height="2" fill="#111"/><rect x="61.10" y="0" width="1.8" height="2" fill="#111"/></svg>
<div class="a" style="left:340px;top:437px;width:149px;height:70px;border-radius:10px;background:linear-gradient(#aacbea 0,#9fbfe1 14%,#98b7da 100%);box-shadow:-10px 11px 13px 1px rgba(0,0,0,0.27)"></div>
<div class="a" style="left:340px;top:437px;width:149px;height:70px;border-radius:10px;box-shadow:inset 3px 0 2px -1px rgba(255,255,255,0.75), inset -3px 0 2px -1px rgba(255,255,255,0.75), inset 0 -2px 3px rgba(0,0,0,0.05)"></div>
<div class="a" style="left:341px;top:441px;width:147px;height:62px;border-radius:8px;border-left:1.5px solid rgba(255,255,255,0.7);border-right:1.5px solid rgba(255,255,255,0.7);filter:blur(0.4px)"></div>
<div class="a" style="left:375px;top:456px;width:100px;height:46px;border-radius:6px;background:rgba(0,0,0,0.045);filter:blur(4px)"></div>
<div class="a t bx" style="left:388px;top:447px">Disque Dur</div>
<svg class="a" style="left:383px;top:473px" width="64" height="2" viewBox="0 0 64 2"><rect x="0.00" y="0" width="1.8" height="2" fill="#111"/><rect x="2.55" y="0" width="1.8" height="2" fill="#111"/><rect x="5.10" y="0" width="1.8" height="2" fill="#111"/><rect x="8.00" y="0" width="1.8" height="2" fill="#111"/><rect x="10.55" y="0" width="1.8" height="2" fill="#111"/><rect x="13.10" y="0" width="1.8" height="2" fill="#111"/><rect x="16.00" y="0" width="1.8" height="2" fill="#111"/><rect x="18.55" y="0" width="1.8" height="2" fill="#111"/><rect x="21.10" y="0" width="1.8" height="2" fill="#111"/><rect x="24.00" y="0" width="1.8" height="2" fill="#111"/><rect x="26.55" y="0" width="1.8" height="2" fill="#111"/><rect x="29.10" y="0" width="1.8" height="2" fill="#111"/><rect x="32.00" y="0" width="1.8" height="2" fill="#111"/><rect x="34.55" y="0" width="1.8" height="2" fill="#111"/><rect x="37.10" y="0" width="1.8" height="2" fill="#111"/><rect x="40.00" y="0" width="1.8" height="2" fill="#111"/><rect x="42.55" y="0" width="1.8" height="2" fill="#111"/><rect x="45.10" y="0" width="1.8" height="2" fill="#111"/><rect x="48.00" y="0" width="1.8" height="2" fill="#111"/><rect x="50.55" y="0" width="1.8" height="2" fill="#111"/><rect x="53.10" y="0" width="1.8" height="2" fill="#111"/><rect x="56.00" y="0" width="1.8" height="2" fill="#111"/><rect x="58.55" y="0" width="1.8" height="2" fill="#111"/><rect x="61.10" y="0" width="1.8" height="2" fill="#111"/></svg>
<svg class="a" style="left:383px;top:495px" width="64" height="2" viewBox="0 0 64 2"><rect x="0.00" y="0" width="1.8" height="2" fill="#111"/><rect x="2.55" y="0" width="1.8" height="2" fill="#111"/><rect x="5.10" y="0" width="1.8" height="2" fill="#111"/><rect x="8.00" y="0" width="1.8" height="2" fill="#111"/><rect x="10.55" y="0" width="1.8" height="2" fill="#111"/><rect x="13.10" y="0" width="1.8" height="2" fill="#111"/><rect x="16.00" y="0" width="1.8" height="2" fill="#111"/><rect x="18.55" y="0" width="1.8" height="2" fill="#111"/><rect x="21.10" y="0" width="1.8" height="2" fill="#111"/><rect x="24.00" y="0" width="1.8" height="2" fill="#111"/><rect x="26.55" y="0" width="1.8" height="2" fill="#111"/><rect x="29.10" y="0" width="1.8" height="2" fill="#111"/><rect x="32.00" y="0" width="1.8" height="2" fill="#111"/><rect x="34.55" y="0" width="1.8" height="2" fill="#111"/><rect x="37.10" y="0" width="1.8" height="2" fill="#111"/><rect x="40.00" y="0" width="1.8" height="2" fill="#111"/><rect x="42.55" y="0" width="1.8" height="2" fill="#111"/><rect x="45.10" y="0" width="1.8" height="2" fill="#111"/><rect x="48.00" y="0" width="1.8" height="2" fill="#111"/><rect x="50.55" y="0" width="1.8" height="2" fill="#111"/><rect x="53.10" y="0" width="1.8" height="2" fill="#111"/><rect x="56.00" y="0" width="1.8" height="2" fill="#111"/><rect x="58.55" y="0" width="1.8" height="2" fill="#111"/><rect x="61.10" y="0" width="1.8" height="2" fill="#111"/></svg>
<div class="a" style="left:312px;top:371px;width:12px;height:10px;background:rgba(0,0,0,0.12);filter:blur(3px)"></div>
<div class="a" style="left:478px;top:371px;width:12px;height:10px;background:rgba(0,0,0,0.12);filter:blur(3px)"></div>
<div class="a" style="left:396px;top:416px;width:9px;height:16px;background:rgba(0,0,0,0.15);filter:blur(3px)"></div>
<svg class="a" style="left:321px;top:361px" width="20" height="11" viewBox="0 0 20 11"><defs><linearGradient id="ag321" x1="0" y1="0" x2="0" y2="1"><stop offset="0" stop-color="#5b8ee0"/><stop offset="1" stop-color="#3f6fc4"/></linearGradient></defs><path d="M0 3h14V1l4.6 4.5L14 10V8H0l2.5-2.5z" fill="url(#ag321)"/><circle cx="16" cy="5.5" r="1" fill="#9cc6f5"/></svg>
<svg class="a" style="left:487px;top:361px" width="20" height="11" viewBox="0 0 20 11"><defs><linearGradient id="ag487" x1="0" y1="0" x2="0" y2="1"><stop offset="0" stop-color="#5b8ee0"/><stop offset="1" stop-color="#3f6fc4"/></linearGradient></defs><path d="M0 3h14V1l4.6 4.5L14 10V8H0l2.5-2.5z" fill="url(#ag487)"/><circle cx="16" cy="5.5" r="1" fill="#9cc6f5"/></svg>
<svg class="a" style="left:409px;top:404px" width="11" height="19" viewBox="0 0 11 19"><path d="M5.5 1l4 4.5H7.5v8h2l-4 4.5-4-4.5h2v-8h-2z" fill="#9cc3f0" stroke="#4a7bd0" stroke-width="0.9"/></svg>
<!-- RULER -->
<div class="a" style="left:3px;top:157px;width:20px;height:21px;background:#d5d5d5"></div>
<div class="a" style="left:5px;top:159px;width:16px;height:17px;background:#f4f4f4"></div>
<svg class="a" style="left:9px;top:164px" width="8" height="7" viewBox="0 0 8 7"><path d="M1 0v6h6" fill="none" stroke="#555" stroke-width="1.6"/></svg>
<div class="a" style="left:126px;top:162px;width:553px;height:10px;background:#c6c6c6"></div>
<div class="a" style="left:191px;top:162px;width:423px;height:10px;background:#fff"></div>
<div class="a" style="left:131px;top:167px;width:1px;height:2px;background:#555"></div>
<div class="a t rl" style="left:129.2px;top:163.2px;width:20px;text-align:center">2</div>
<div class="a" style="left:144px;top:167px;width:1px;height:2px;background:#555"></div>
<div class="a" style="left:151px;top:166px;width:1px;height:5px;background:#444"></div>
<div class="a" style="left:158px;top:167px;width:1px;height:2px;background:#555"></div>
<div class="a t rl" style="left:155.6px;top:163.2px;width:20px;text-align:center">1</div>
<div class="a" style="left:171px;top:167px;width:1px;height:2px;background:#555"></div>
<div class="a" style="left:178px;top:166px;width:1px;height:5px;background:#444"></div>
<div class="a" style="left:184px;top:167px;width:1px;height:2px;background:#555"></div>
<div class="a" style="left:197px;top:167px;width:1px;height:2px;background:#555"></div>
<div class="a" style="left:204px;top:166px;width:1px;height:5px;background:#444"></div>
<div class="a" style="left:210px;top:167px;width:1px;height:2px;background:#555"></div>
<div class="a t rl" style="left:208.4px;top:163.2px;width:20px;text-align:center">1</div>
<div class="a" style="left:224px;top:167px;width:1px;height:2px;background:#555"></div>
<div class="a" style="left:230px;top:166px;width:1px;height:5px;background:#444"></div>
<div class="a" style="left:237px;top:167px;width:1px;height:2px;background:#555"></div>
<div class="a t rl" style="left:234.8px;top:163.2px;width:20px;text-align:center">2</div>
<div class="a" style="left:250px;top:167px;width:1px;height:2px;background:#555"></div>
<div class="a" style="left:257px;top:166px;width:1px;height:5px;background:#444"></div>
<div class="a" style="left:263px;top:167px;width:1px;height:2px;background:#555"></div>
<div class="a t rl" style="left:261.1px;top:163.2px;width:20px;text-align:center">3</div>
<div class="a" style="left:276px;top:167px;width:1px;height:2px;background:#555"></div>
<div class="a" style="left:283px;top:166px;width:1px;height:5px;background:#444"></div>
<div class="a" style="left:290px;top:167px;width:1px;height:2px;background:#555"></div>
<div class="a t rl" style="left:287.5px;top:163.2px;width:20px;text-align:center">4</div>
<div class="a" style="left:303px;top:167px;width:1px;height:2px;background:#555"></div>
<div class="a" style="left:309px;top:166px;width:1px;height:5px;background:#444"></div>
<div class="a" style="left:316px;top:167px;width:1px;height:2px;background:#555"></div>
<div class="a t rl" style="left:313.9px;top:163.2px;width:20px;text-align:center">5</div>
<div class="a" style="left:329px;top:167px;width:1px;height:2px;background:#555"></div>
<div class="a" style="left:336px;top:166px;width:1px;height:5px;background:#444"></div>
<div class="a" style="left:342px;top:167px;width:1px;height:2px;background:#555"></div>
<div class="a t rl" style="left:340.3px;top:163.2px;width:20px;text-align:center">6</div>
<div class="a" style="left:356px;top:167px;width:1px;height:2px;background:#555"></div>
<div class="a" style="left:362px;top:166px;width:1px;height:5px;background:#444"></div>
<div class="a" style="left:369px;top:167px;width:1px;height:2px;background:#555"></div>
<div class="a t rl" style="left:366.7px;top:163.2px;width:20px;text-align:center">7</div>
<div class="a" style="left:382px;top:167px;width:1px;height:2px;background:#555"></div>
<div class="a" style="left:388px;top:166px;width:1px;height:5px;background:#444"></div>
<div class="a" style="left:395px;top:167px;width:1px;height:2px;background:#555"></div>
<div class="a t rl" style="left:393.0px;top:163.2px;width:20px;text-align:center">8</div>
<div class="a" style="left:408px;top:167px;width:1px;height:2px;background:#555"></div>
<div class="a" style="left:415px;top:166px;width:1px;height:5px;background:#444"></div>
<div class="a" style="left:422px;top:167px;width:1px;height:2px;background:#555"></div>
<div class="a t rl" style="left:419.4px;top:163.2px;width:20px;text-align:center">9</div>
<div class="a" style="left:435px;top:167px;width:1px;height:2px;background:#555"></div>
<div class="a" style="left:441px;top:166px;width:1px;height:5px;background:#444"></div>
<div class="a" style="left:448px;top:167px;width:1px;height:2px;background:#555"></div>
<div class="a t rl" style="left:445.8px;top:163.2px;width:20px;text-align:center">10</div>
<div class="a" style="left:461px;top:167px;width:1px;height:2px;background:#555"></div>
<div class="a" style="left:468px;top:166px;width:1px;height:5px;background:#444"></div>
<div class="a" style="left:474px;top:167px;width:1px;height:2px;background:#555"></div>
<div class="a t rl" style="left:472.2px;top:163.2px;width:20px;text-align:center">11</div>
<div class="a" style="left:488px;top:167px;width:1px;height:2px;background:#555"></div>
<div class="a" style="left:494px;top:166px;width:1px;height:5px;background:#444"></div>
<div class="a" style="left:501px;top:167px;width:1px;height:2px;background:#555"></div>
<div class="a t rl" style="left:498.6px;top:163.2px;width:20px;text-align:center">12</div>
<div class="a" style="left:514px;top:167px;width:1px;height:2px;background:#555"></div>
<div class="a" style="left:520px;top:166px;width:1px;height:5px;background:#444"></div>
<div class="a" style="left:527px;top:167px;width:1px;height:2px;background:#555"></div>
<div class="a t rl" style="left:524.9px;top:163.2px;width:20px;text-align:center">13</div>
<div class="a" style="left:540px;top:167px;width:1px;height:2px;background:#555"></div>
<div class="a" style="left:547px;top:166px;width:1px;height:5px;background:#444"></div>
<div class="a" style="left:553px;top:167px;width:1px;height:2px;background:#555"></div>
<div class="a t rl" style="left:551.3px;top:163.2px;width:20px;text-align:center">14</div>
<div class="a" style="left:567px;top:167px;width:1px;height:2px;background:#555"></div>
<div class="a" style="left:573px;top:166px;width:1px;height:5px;background:#444"></div>
<div class="a" style="left:580px;top:167px;width:1px;height:2px;background:#555"></div>
<div class="a t rl" style="left:577.7px;top:163.2px;width:20px;text-align:center">15</div>
<div class="a" style="left:593px;top:167px;width:1px;height:2px;background:#555"></div>
<div class="a" style="left:600px;top:166px;width:1px;height:5px;background:#444"></div>
<div class="a" style="left:606px;top:167px;width:1px;height:2px;background:#555"></div>
<div class="a" style="left:619px;top:167px;width:1px;height:2px;background:#555"></div>
<div class="a" style="left:626px;top:166px;width:1px;height:5px;background:#444"></div>
<div class="a" style="left:633px;top:167px;width:1px;height:2px;background:#555"></div>
<div class="a t rl" style="left:630.5px;top:163.2px;width:20px;text-align:center">17</div>
<div class="a" style="left:646px;top:167px;width:1px;height:2px;background:#555"></div>
<div class="a" style="left:652px;top:166px;width:1px;height:5px;background:#444"></div>
<div class="a" style="left:659px;top:167px;width:1px;height:2px;background:#555"></div>
<div class="a t rl" style="left:656.8px;top:163.2px;width:20px;text-align:center">18</div>
<div class="a" style="left:672px;top:167px;width:1px;height:2px;background:#555"></div>
<svg class="a" style="left:185px;top:158px" width="12" height="23" viewBox="0 0 12 23"><path d="M1.5 0.5h9L6 6.5zM6 6.5L1.5 13.5h9z" fill="#fff" stroke="#7a7a7a"/><rect x="1.5" y="14.5" width="9" height="7" fill="#fff" stroke="#7a7a7a"/></svg>
<svg class="a" style="left:608px;top:165px" width="12" height="9" viewBox="0 0 12 9"><path d="M6 1l4.5 6.5h-9z" fill="#fff" stroke="#7a7a7a"/></svg>
<svg class="a" style="left:345px;top:169px" width="7" height="6" viewBox="0 0 7 6"><path d="M1 0v5h6" fill="none" stroke="#555" stroke-width="1.5"/></svg>
<div class="a" style="left:5px;top:180.5px;width:11px;height:351px;background:#fff"></div>
<div class="a t rl rlv" style="left:1.5px;top:176.3px;width:20px;height:12px;text-align:center;transform:rotate(-90deg)">5</div>
<div class="a t rl rlv" style="left:1.5px;top:202.7px;width:20px;height:12px;text-align:center;transform:rotate(-90deg)">6</div>
<div class="a t rl rlv" style="left:1.5px;top:229.1px;width:20px;height:12px;text-align:center;transform:rotate(-90deg)">7</div>
<div class="a t rl rlv" style="left:1.5px;top:255.5px;width:20px;height:12px;text-align:center;transform:rotate(-90deg)">8</div>
<div class="a t rl rlv" style="left:1.5px;top:281.9px;width:20px;height:12px;text-align:center;transform:rotate(-90deg)">9</div>
<div class="a t rl rlv" style="left:1.5px;top:308.3px;width:20px;height:12px;text-align:center;transform:rotate(-90deg)">10</div>
<div class="a t rl rlv" style="left:1.5px;top:334.7px;width:20px;height:12px;text-align:center;transform:rotate(-90deg)">11</div>
<div class="a t rl rlv" style="left:1.5px;top:361.1px;width:20px;height:12px;text-align:center;transform:rotate(-90deg)">12</div>
<div class="a t rl rlv" style="left:1.5px;top:387.5px;width:20px;height:12px;text-align:center;transform:rotate(-90deg)">13</div>
<div class="a t rl rlv" style="left:1.5px;top:413.9px;width:20px;height:12px;text-align:center;transform:rotate(-90deg)">14</div>
<div class="a t rl rlv" style="left:1.5px;top:440.3px;width:20px;height:12px;text-align:center;transform:rotate(-90deg)">15</div>
<div class="a t rl rlv" style="left:1.5px;top:466.7px;width:20px;height:12px;text-align:center;transform:rotate(-90deg)">16</div>
<div class="a t rl rlv" style="left:1.5px;top:493.1px;width:20px;height:12px;text-align:center;transform:rotate(-90deg)">17</div>
<div class="a t rl rlv" style="left:1.5px;top:519.5px;width:20px;height:12px;text-align:center;transform:rotate(-90deg)">18</div>
<div class="a" style="left:11px;top:188px;width:2px;height:1px;background:#555"></div>
<div class="a" style="left:10px;top:195px;width:5px;height:1px;background:#444"></div>
<div class="a" style="left:11px;top:202px;width:2px;height:1px;background:#555"></div>
<div class="a" style="left:11px;top:215px;width:2px;height:1px;background:#555"></div>
<div class="a" style="left:10px;top:221px;width:5px;height:1px;background:#444"></div>
<div class="a" style="left:11px;top:228px;width:2px;height:1px;background:#555"></div>
<div class="a" style="left:11px;top:241px;width:2px;height:1px;background:#555"></div>
<div class="a" style="left:10px;top:248px;width:5px;height:1px;background:#444"></div>
<div class="a" style="left:11px;top:254px;width:2px;height:1px;background:#555"></div>
<div class="a" style="left:11px;top:268px;width:2px;height:1px;background:#555"></div>
<div class="a" style="left:10px;top:274px;width:5px;height:1px;background:#444"></div>
<div class="a" style="left:11px;top:281px;width:2px;height:1px;background:#555"></div>
<div class="a" style="left:11px;top:294px;width:2px;height:1px;background:#555"></div>
<div class="a" style="left:10px;top:301px;width:5px;height:1px;background:#444"></div>
<div class="a" style="left:11px;top:307px;width:2px;height:1px;background:#555"></div>
<div class="a" style="left:11px;top:320px;width:2px;height:1px;background:#555"></div>
<div class="a" style="left:10px;top:327px;width:5px;height:1px;background:#444"></div>
<div class="a" style="left:11px;top:334px;width:2px;height:1px;background:#555"></div>
<div class="a" style="left:11px;top:347px;width:2px;height:1px;background:#555"></div>
<div class="a" style="left:10px;top:353px;width:5px;height:1px;background:#444"></div>
<div class="a" style="left:11px;top:360px;width:2px;height:1px;background:#555"></div>
<div class="a" style="left:11px;top:373px;width:2px;height:1px;background:#555"></div>
<div class="a" style="left:10px;top:380px;width:5px;height:1px;background:#444"></div>
<div class="a" style="left:11px;top:386px;width:2px;height:1px;background:#555"></div>
<div class="a" style="left:11px;top:400px;width:2px;height:1px;background:#555"></div>
<div class="a" style="left:10px;top:406px;width:5px;height:1px;background:#444"></div>
<div class="a" style="left:11px;top:413px;width:2px;height:1px;background:#555"></div>
<div class="a" style="left:11px;top:426px;width:2px;height:1px;background:#555"></div>
<div class="a" style="left:10px;top:433px;width:5px;height:1px;background:#444"></div>
<div class="a" style="left:11px;top:439px;width:2px;height:1px;background:#555"></div>
<div class="a" style="left:11px;top:452px;width:2px;height:1px;background:#555"></div>
<div class="a" style="left:10px;top:459px;width:5px;height:1px;background:#444"></div>
<div class="a" style="left:11px;top:466px;width:2px;height:1px;background:#555"></div>
<div class="a" style="left:11px;top:479px;width:2px;height:1px;background:#555"></div>
<div class="a" style="left:10px;top:485px;width:5px;height:1px;background:#444"></div>
<div class="a" style="left:11px;top:492px;width:2px;height:1px;background:#555"></div>
<div class="a" style="left:11px;top:505px;width:2px;height:1px;background:#555"></div>
<div class="a" style="left:10px;top:512px;width:5px;height:1px;background:#444"></div>
<div class="a" style="left:11px;top:518px;width:2px;height:1px;background:#555"></div>
<div class="a" style="left:784px;top:183px;width:15px;height:353px;background:#f0f0f0"></div>
<div class="a" style="left:784px;top:183px;width:15px;height:15px;background:#fff;border:1px solid #8e8e8e"></div>
<svg class="a" style="left:788px;top:188px" width="7" height="4" viewBox="0 0 7 4"><path d="M0 4h7L3.5 0z" fill="#222"/></svg>
<div class="a" style="left:784px;top:460px;width:15px;height:36px;background:#fff;border:1px solid #8e8e8e"></div>
<div class="a" style="left:784px;top:521px;width:15px;height:15px;background:#fff;border:1px solid #8e8e8e"></div>
<svg class="a" style="left:788px;top:526px" width="7" height="4" viewBox="0 0 7 4"><path d="M0 0h7L3.5 4z" fill="#222"/></svg>

<div id="status" class="a"></div>
<div id="taskbar" class="a"></div>

<!-- STATUS -->
<div class="a t sb" style="left:12px;top:544px">Page 4 sur 4</div>
<div class="a t sb" style="left:94px;top:544px">163 mots</div>
<svg class="a" style="left:157px;top:541px" width="16" height="15" viewBox="0 0 16 15"><path d="M1.5 1.5h3.5l2.5 1.5 2.5-1.5h1v1M1.5 1.5v10h4l2 1.5 2-1.5h3.5v-3" fill="none" stroke="#666" stroke-width="1"/><path d="M7.5 3v10M6 11.5l1.5 2 1.5-2" fill="none" stroke="#666" stroke-width="1"/><path d="M10.5 3l4 4.5M14.5 3l-4 4.5" stroke="#555" stroke-width="1.1"/><path d="M10.5 9h4" stroke="#555"/></svg>
<div class="a t sb" style="left:190px;top:544px;letter-spacing:-0.3px">Français (France)</div>
<svg class="a" style="left:293px;top:542px" width="15" height="13" viewBox="0 0 15 13"><circle cx="3.5" cy="3" r="2.8" fill="#555"/><rect x="6.5" y="1" width="7.5" height="3" fill="#555"/><rect x="1.5" y="5.5" width="12.5" height="7.5" fill="#555"/><path d="M3 7.6h1.5M6 7.6h1.5M9 7.6h1.5M12 7.6h1M3 9.8h1.5M6 9.8h1.5M9 9.8h1.5M12 9.8h1M3 12h1.5M6 12h1.5M9 12h1.5M12 12h1" stroke="#f3f3f3" stroke-width="1"/></svg>
<svg class="a" style="left:509px;top:541px" width="15" height="14" viewBox="0 0 15 14"><path d="M0.5 1.5h6l1 1 1-1h6v10h-6l-1 1-1-1h-6z" fill="none" stroke="#666"/><path d="M7.5 2.5v9M2 4h4M2 6h4M2 8h4M9 4h4M9 6h4M9 8h4" stroke="#666" stroke-width="0.8"/></svg>
<div class="a" style="left:537px;top:539px;width:40px;height:21px;background:#c8c8c8"></div>
<svg class="a" style="left:550px;top:542px" width="14" height="14" viewBox="0 0 14 14"><rect x="0.5" y="0.5" width="13" height="13" fill="none" stroke="#666"/><path d="M3 3.5h8M3 5.5h8M3 7.5h8M3 9.5h8M3 11.5h8" stroke="#666" stroke-width="0.8"/></svg>
<svg class="a" style="left:589px;top:541px" width="17" height="15" viewBox="0 0 17 15"><path d="M0.5 0.5h11v4M0.5 0.5v12h6" fill="none" stroke="#666"/><path d="M2.5 3h7M2.5 5h5M2.5 7h4M2.5 9h4" stroke="#666" stroke-width="0.8"/><circle cx="12" cy="10.5" r="4" fill="#666"/><path d="M9 10.5h6M12 7v7" stroke="#f3f3f3" stroke-width="0.7"/></svg>
<div class="a" style="left:623px;top:548px;width:8px;height:1px;background:#444"></div>
<div class="a" style="left:636px;top:549px;width:100px;height:1px;background:#444"></div>
<div class="a" style="left:668px;top:544px;width:6px;height:11px;background:#444"></div>
<div class="a" style="left:686px;top:547px;width:1px;height:5px;background:#444"></div>
<div class="a" style="left:740px;top:548px;width:9px;height:1px;background:#444"></div>
<div class="a" style="left:744px;top:544px;width:1px;height:9px;background:#444"></div>
<div class="a t sb" style="left:762px;top:544px">70 %</div>
<!-- TASKBAR -->
<div class="a" style="left:0;top:560px;width:48px;height:40px;background:#213943"></div>
<svg class="a" style="left:16px;top:572px" width="17" height="17" viewBox="0 0 17 17"><path d="M0 1.7L6.3 0.9V7.1H0zM7.4 0.8L16.5 0V7.1H7.4zM0 8.1h6.3v6.3L0 15.4zM7.4 8.1h9.1V16.2L7.4 15.2z" fill="#fff"/></svg>
<div class="a" style="left:48px;top:560px;width:288px;height:40px;background:#f2f2f2;border-top:1px solid #c4c4c4;border-bottom:1px solid #c4c4c4"></div>
<svg class="a" style="left:59px;top:571px" width="18" height="18" viewBox="0 0 18 18"><circle cx="11" cy="7" r="5.5" fill="none" stroke="#1a1a1a" stroke-width="1.4"/><path d="M7 11L1 17" stroke="#1a1a1a" stroke-width="1.5"/></svg>
<div class="a t" style="left:88px;top:573px;font-size:15px;color:#333;letter-spacing:-0.08px">Taper ici pour rechercher</div>
<svg class="a" style="left:351px;top:571px" width="18" height="17" viewBox="0 0 18 17"><path d="M1.5 1v2.5h10V1M1.5 16v-2.5h10V16M1.5 5.5h10v5.5h-10z" fill="none" stroke="#fff" stroke-width="1.2"/><path d="M15.5 1v16" stroke="#fff" stroke-width="1.2"/><rect x="14" y="5" width="3" height="3" fill="#fff"/></svg>
<div class="a" style="left:387px;top:560px;width:38px;height:40px;background:#4a5760"></div>
<div class="a" style="left:387px;top:598px;width:38px;height:2px;background:#79b6ea"></div>
<svg class="a" style="left:393px;top:568px" width="26" height="24" viewBox="0 0 26 24"><rect x="6" y="1" width="18" height="22" rx="1" fill="#2b7cd3"/><rect x="6" y="1" width="18" height="5.5" fill="#41a5ee"/><rect x="6" y="12" width="18" height="5.5" fill="#185abd"/><rect x="6" y="17.5" width="18" height="5.5" rx="1" fill="#103f91"/><rect x="1" y="6" width="12" height="12" rx="1" fill="#185abd"/><path d="M2.8 8.5l1.6 7 1.8-5.3 1.8 5.3 1.6-7" fill="none" stroke="#fff" stroke-width="1.2"/></svg>
<svg class="a" style="left:432px;top:568px" width="26" height="24" viewBox="0 0 26 24"><rect x="6" y="1" width="18" height="22" rx="1" fill="#21a366"/><rect x="15" y="1" width="9" height="11" fill="#33c481"/><rect x="6" y="12" width="18" height="11" rx="1" fill="#107c41"/><rect x="15" y="12" width="9" height="11" fill="#185c37"/><rect x="1" y="6" width="12" height="12" rx="1" fill="#107c41"/><path d="M4 9l5 6M9 9l-5 6" stroke="#fff" stroke-width="1.5"/></svg>
<svg class="a" style="left:471px;top:567px" width="26" height="26" viewBox="0 0 26 26"><defs><linearGradient id="ff1" x1="0.7" y1="0" x2="0.3" y2="1"><stop offset="0" stop-color="#ffd43a"/><stop offset="0.35" stop-color="#ff8a1e"/><stop offset="0.75" stop-color="#f5304f"/><stop offset="1" stop-color="#e5178a"/></linearGradient></defs><path d="M13 25C6.5 25 1.5 20 1.5 13.5c0-3 1-5.5 2.5-7.5 0.5 1.5 1 2.5 2 3C7 5.5 9.5 4 12 3.5c-0.5 1 -0.5 2 0 3 2-2.5 3.5-5 3.5-6 4 2 9 6 9 12.5 0 7-5 12-11.5 12z" fill="url(#ff1)"/><circle cx="14" cy="14" r="5.8" fill="#8d3fd8"/><circle cx="13" cy="13" r="3.8" fill="#6b2bc0"/><path d="M5 12c1.5-2.5 5-3 8-2-2 0.5-3.5 1.5-3.5 3" fill="#ffb02e"/></svg>
<svg class="a" style="left:510px;top:569px" width="26" height="22" viewBox="0 0 26 22"><path d="M7 0.5l16 4v11l-16-3z" fill="#4a5a66"/><path d="M8 2l14 3.5v9L8 11.5z" fill="#45b3f2"/><path d="M8 2l14 3.5v2L8 4z" fill="#7fd0ff"/><path d="M15 14l1 2.5" stroke="#c8cdd2" stroke-width="1.4"/><path d="M1 17.5l8-2.5 8 2.5-8 3z" fill="#d6dbdf"/><path d="M13 16l6-1.5 4 1.5-6 1.5z" fill="#d6dbdf"/></svg>
<div class="a" style="left:544px;top:560px;width:17px;height:40px;background:#efefef"></div>
<svg class="a" style="left:548px;top:567px" width="9" height="6" viewBox="0 0 9 6"><path d="M1 5l3.5-3.5L8 5" fill="none" stroke="#555" stroke-width="1.8"/></svg>
<svg class="a" style="left:548px;top:589px" width="9" height="6" viewBox="0 0 9 6"><path d="M1 1l3.5 3.5L8 1" fill="none" stroke="#555" stroke-width="1.8"/></svg>
<svg class="a" style="left:566px;top:575px" width="14" height="9" viewBox="0 0 14 9"><path d="M1 8l6-6 6 6" fill="none" stroke="#fff" stroke-width="1.3"/></svg>
<div class="a" style="left:589px;top:572px;width:16px;height:16px;background:linear-gradient(#f58a33,#e0620f);border-radius:2px"></div>
<svg class="a" style="left:589px;top:572px" width="16" height="16" viewBox="0 0 16 16"><path d="M4 12.5h9M5.5 10h4.5M4.5 9.5c2 1 4 1 5.5 0" fill="none" stroke="#fff" stroke-width="1"/><path d="M6 8.5l3-5 1.5 1-2.5 4.5" fill="none" stroke="#fff" stroke-width="1"/><path d="M10.5 8.5c1.5 0 1.5 2 0 2" fill="none" stroke="#fff" stroke-width="1"/></svg>
<svg class="a" style="left:616px;top:571px" width="19" height="18" viewBox="0 0 19 18"><path d="M5.5 16.5l1-4 7-10.5c0.7-1 2.3 0 1.7 1l-7 10.5z" fill="none" stroke="#fff" stroke-width="1.1"/><path d="M5 11c-2.5 0-4 1.5-4 3s1.5 3 4 2.5" fill="none" stroke="#fff" stroke-width="1.1"/><path d="M13 8.5c2-1 3.5-0.5 3.5 1s-1.5 2-3.5 1.5" fill="none" stroke="#fff" stroke-width="1.1"/></svg>
<div class="a t" style="left:648px;top:573px;font-size:12.5px;color:#fff;letter-spacing:-0.8px">FRA</div>
<div class="a t" style="left:698px;top:565px;font-size:12.5px;color:#fff;letter-spacing:-0.7px">20:30</div>
<div class="a t" style="left:683px;top:582px;font-size:12.5px;color:#fff;letter-spacing:-0.45px">10/12/2025</div>
<svg class="a" style="left:758px;top:571px" width="28" height="28" viewBox="0 0 28 28"><path d="M1 1h16v12H9.5l-3 3v-3H1z" fill="#fff"/><path d="M4 4.5h10M4 7.5h10M4 10.5h6" stroke="#1a2541" stroke-width="1"/><circle cx="16.7" cy="16.3" r="8" fill="#353535" stroke="#8a8a8a" stroke-width="0.9"/></svg>
<div class="a t" style="left:771.5px;top:582px;font-size:12px;font-weight:bold;color:#fff">5</div>
<div class="a" style="left:795px;top:560px;width:1px;height:40px;background:#4a5570"></div>
</body></html>
